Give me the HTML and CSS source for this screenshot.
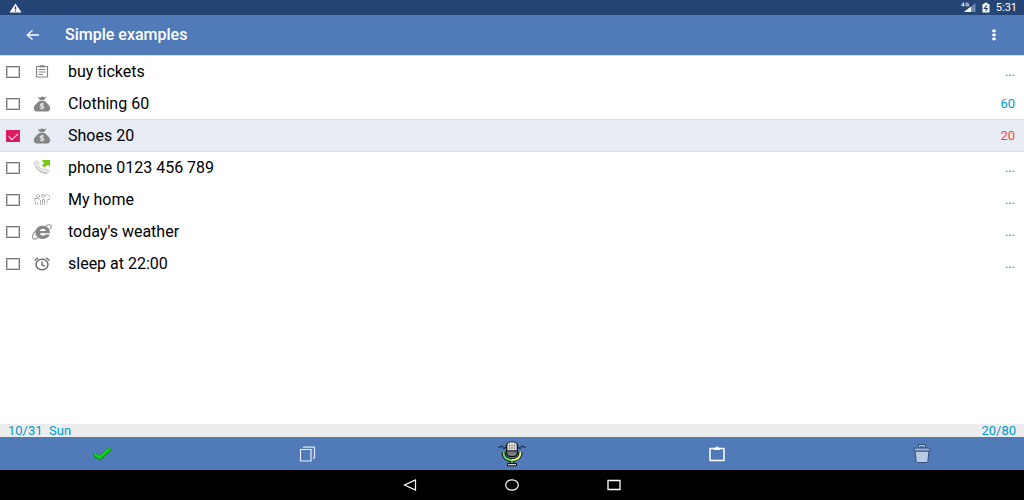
FILE: index.html
```html
<!DOCTYPE html>
<html lang="en">

<head>
    <meta charset="UTF-8">
    <meta name="viewport" content="width=device-width, initial-scale=1.0">
    <title>Simple examples</title>
    <link rel="stylesheet" href="styles.css">
</head>

<body>

    <!-- money bag is used by more than one row -->
    <svg class="defs" width="0" height="0" aria-hidden="true">
        <symbol id="moneyBag" viewBox="0 0 20 16">
            <path d="M5.500.8 8 1.800 10 .3 12 1.300 14.500.3 12 4.200H8z" fill="#858585" />
            <path d="M7.500 5h5c2.700 2 5.700 4.800 5.700 7.200 0 1.900-1.200 3.300-3 3.300H4.800c-1.800 0-3-1.400-3-3.300C1.800 9.800 4.800 7 7.500 5z" fill="#858585" />
            <path d="M12 8.300c-1-.8-4-.7-4 .7 0 1.600 4.100.7 4.100 2.300 0 1.500-3.200 1.400-4.300.5M10 7v6.500" fill="none" stroke="#fff" stroke-width=".9" />
        </symbol>
    </svg>

    <div class="screen">
        <div class="status-bar">
            <svg width="14" height="10" viewBox="0 0 14 10">
                <path d="M7.500.5 13.500 9.500H1.500z" fill="#fff" />
                <path d="M7.500 3.500v3M7.500 7.300v1.200" stroke="#254576" stroke-width="1.400" />
            </svg>
            <div class="status-right">
                <svg width="15" height="11" viewBox="0 0 15 11">
                    <path d="M14.500 1v9H3z" fill="#7188ac" />
                    <path d="M10 4.500V10H3z" fill="#fff" />
                    <path d="M2.500 4.500V.7L.5 3.300h3M7.500 1.200H5v2.600h2.500V2.500H6.500" fill="none" stroke="#fff" stroke-width=".8" />
                </svg>
                <svg width="8" height="11" viewBox="0 0 8 11">
                    <path d="M.5 2H2.500V.8h3V2h2v8.500h-7z" fill="#fff" />
                    <path d="M5 3 2.300 6.500h3L3.500 9" fill="none" stroke="#254576" stroke-width="1.100" />
                </svg>
                <span>5:31</span>
            </div>
        </div>

        <header class="app-bar">
            <button type="button" class="icon-btn" aria-label="Back">
                <svg width="14" height="12" viewBox="0 0 14 12">
                    <path d="M13 6H1.500M6.500 1.500 1.200 6l5.300 4.500" fill="none" stroke="#fff" stroke-width="1.300" />
                </svg>
            </button>
            <h1>Simple examples</h1>
            <button type="button" class="icon-btn" aria-label="More options">
                <svg width="4" height="12" viewBox="0 0 4 12">
                    <g fill="#fff">
                        <ellipse cx="2" cy="2" rx="1.900" ry="1.400" />
                        <ellipse cx="2" cy="6" rx="1.900" ry="1.400" />
                        <ellipse cx="2" cy="10" rx="1.900" ry="1.400" />
                    </g>
                </svg>
            </button>
        </header>

        <main>
            <ul class="list">
                <li class="row">
                    <input type="checkbox" id="item1">
                    <svg class="row-icon" width="20" height="16" viewBox="0 0 20 16">
                        <path d="M4.500 2.500h11v10.500h-11z" fill="none" stroke="#858585" stroke-width="1.200" />
                        <path d="M7.500 1.200h5v2.300h-5z" fill="#858585" />
                        <path d="M6.500 5.500h7M6.500 8h7M6.500 10.500h4.500" fill="none" stroke="#858585" stroke-width="1.200" />
                    </svg>
                    <label for="item1">buy tickets</label>
                    <span class="amount">...</span>
                </li>
                <li class="row">
                    <input type="checkbox" id="item2">
                    <svg class="row-icon" width="20" height="16"><use href="#moneyBag" /></svg>
                    <label for="item2">Clothing 60</label>
                    <span class="amount">60</span>
                </li>
                <li class="row selected">
                    <input type="checkbox" id="item3" checked>
                    <svg class="row-icon" width="20" height="16"><use href="#moneyBag" /></svg>
                    <label for="item3">Shoes 20</label>
                    <span class="amount">20</span>
                </li>
                <li class="row">
                    <input type="checkbox" id="item4">
                    <svg class="row-icon" width="20" height="16" viewBox="0 0 20 16">
                        <path d="M2.500 2.500c.5-1.700 2.500-2 3.500-.7l1 2c.3.700-1 1.200-.7 1.800 1 1.800 2.600 3 4.600 3.900.8.300 1.400-1 2.200-.7l3 1.200c1.500.7.700 2.500-.8 3.100C9.500 14.500 2 7.500 2.500 2.500z" fill="#e8e8e8" stroke="#bbb" stroke-width=".6" />
                        <path d="M4 7c2.500 4.500 6.500 6.300 11 6" fill="none" stroke="#aaa" stroke-width=".9" />
                        <path d="M10.500 0H18v6.500l-2.200-1.700L12.500 7.500 9.800 5.500 13 2.500H10.500z" fill="#78c80c" />
                    </svg>
                    <label for="item4">phone 0123 456 789</label>
                    <span class="amount">...</span>
                </li>
                <li class="row">
                    <input type="checkbox" id="item5">
                    <svg class="row-icon" width="20" height="16" viewBox="0 0 20 16">
                        <g fill="none" stroke="#aaa" stroke-width=".9">
                            <ellipse cx="6" cy="4" rx="1.700" ry="1.400" />
                            <ellipse cx="11" cy="4" rx="1.700" ry="1.400" />
                            <path d="M3.500 13V10l-.8-1V6.500h4L8.500 8v5M5.800 13v-3M10.500 13V7.500h2V13" />
                            <path d="M13 4l2-1.500L17.500 4v3.500H15V13" stroke-dasharray="3 1" />
                        </g>
                    </svg>
                    <label for="item5">My home</label>
                    <span class="amount">...</span>
                </li>
                <li class="row">
                    <input type="checkbox" id="item6">
                    <svg class="row-icon" width="20" height="16" viewBox="0 0 20 16">
                        <path d="M18 9.200H8c.2 1.600 1.300 2.400 3 2.400 1.300 0 2.200-.4 2.700-1.100h4.100c-.9 2.900-3.500 4.400-7 4.400-4.400 0-7.300-2.500-7.300-6.500s2.900-6.600 7.300-6.600c4.700 0 7.400 2.800 7.200 7.400zM8 7h5.700c-.1-1.500-1.200-2.300-2.800-2.300S8.200 5.500 8 7z" fill="#888" fill-rule="evenodd" />
                        <path d="M13.500 2C16.500.3 19.500.2 19.300 2.600c-.1.800-.5 1.500-1 2.200M4 6.500C1.500 8.800-.5 13 1 14.600c1 .9 3.300.2 5-.9" fill="none" stroke="#999" stroke-width="1.200" />
                    </svg>
                    <label for="item6">today's weather</label>
                    <span class="amount">...</span>
                </li>
                <li class="row">
                    <input type="checkbox" id="item7">
                    <svg class="row-icon" width="20" height="16" viewBox="0 0 20 16">
                        <g fill="none" stroke="#666" stroke-width="1.400">
                            <ellipse cx="10" cy="8.500" rx="6" ry="5.200" />
                            <path d="M10 5.500v3.300l2.700 1.600M2.500 4.500 6 1.800M14 1.800l3.500 2.700" />
                        </g>
                    </svg>
                    <label for="item7">sleep at 22:00</label>
                    <span class="amount">...</span>
                </li>
            </ul>
        </main>

        <div class="summary">
            <span class="date">10/31  Sun</span>
            <span>20/80</span>
        </div>

        <div class="toolbar">
            <button type="button" aria-label="Done">
                <svg width="22" height="16" viewBox="0 0 22 16">
                    <path d="M3 8 8.500 12.200 19.500 2.500" fill="none" stroke="#158a22" stroke-width="4" stroke-linejoin="round" />
                    <path d="M3.500 8 8.500 11.700 19 2.500" fill="none" stroke="#0bd80b" stroke-width="2.400" />
                </svg>
            </button>
            <button type="button" aria-label="Copy">
                <svg width="18" height="16" viewBox="0 0 18 16">
                    <path d="M2.500 3.500h10.500v11.500H2.500z" fill="none" stroke="#e9eef6" stroke-width="1.200" />
                    <path d="M5 1.200h11.500v10.800H14.500" fill="none" stroke="#dbe4f1" stroke-width="1.200" />
                </svg>
            </button>
            <button type="button" aria-label="Speak">
                <svg width="30" height="26" viewBox="0 0 30 26">
                    <path d="M1 6h3l1-1.500L7 8l1-2h2M20 6h2l1 2 2-3.500L26 6h3" fill="none" stroke="#15233c" stroke-width="1" />
                    <path d="M6.500 11c0 5.500 3.500 8 8.500 8s8.500-2.500 8.500-8" fill="none" stroke="#111" stroke-width="4" />
                    <path d="M15 19v4" stroke="#111" stroke-width="4" />
                    <path d="M6.500 11c0 5.500 3.500 8 8.500 8" fill="none" stroke="#65dc62" stroke-width="2" />
                    <path d="M15 19c5 0 8.500-2.500 8.500-8" fill="none" stroke="#dcf68a" stroke-width="2" />
                    <path d="M15 19v4" stroke="#71dc57" stroke-width="1.600" />
                    <path d="M10.500 22.500h9v2.300h-9z" fill="#ccc" stroke="#111" stroke-width="1" />
                    <rect x="9.500" y="1" width="11" height="14.500" rx="4" fill="#777980" stroke="#111" stroke-width="1.200" />
                    <path d="M10.500 9.500V4c0-1.500 1-2.500 2.500-2.500h4c1.500 0 2.500 1 2.500 2.500v5.500z" fill="#f4f4f4" />
                    <path d="M12.500 2v7.500M15 2v7.500M17.500 2v7.500M10 4.500h10M10 7h10" stroke="#777" stroke-width=".6" />
                    <path d="M10 9.900h10" stroke="#111" stroke-width="1" />
                </svg>
            </button>
            <button type="button" aria-label="Paste">
                <svg width="18" height="16" viewBox="0 0 18 16">
                    <path d="M2 2.500h14v12H2z" fill="none" stroke="#fff" stroke-width="1.500" stroke-linejoin="round" />
                    <path d="M5 2h2.500V.7h3V2H13L12 4H6z" fill="#fff" />
                </svg>
            </button>
            <button type="button" aria-label="Delete">
                <svg width="18" height="20" viewBox="0 0 18 20">
                    <path d="M6 4V1h6v3" fill="none" stroke="#33507f" stroke-width="2.200" />
                    <path d="M6.500 3.500V1.500h5v2" fill="none" stroke="#b9c9e3" stroke-width="1" />
                    <path d="M2 7h14l-1.200 10.500c-.1.700-.6 1-1.300 1H4.500c-.7 0-1.200-.3-1.300-1z" fill="#b9c9e3" stroke="#33507f" stroke-width="1" />
                    <path d="M1.500 4h15L17.200 7H.8z" fill="#9db3d6" stroke="#33507f" stroke-width="1" />
                </svg>
            </button>
        </div>

        <nav class="nav-bar">
            <button type="button" aria-label="Back">
                <svg width="14" height="12" viewBox="0 0 14 12">
                    <path d="M12.500 1v10L1.500 6z" fill="none" stroke="#fff" stroke-width="1.200" />
                </svg>
            </button>
            <button type="button" aria-label="Home">
                <svg width="14" height="12" viewBox="0 0 14 12">
                    <ellipse cx="7" cy="6" rx="6.300" ry="5.200" fill="none" stroke="#fff" stroke-width="1.200" />
                </svg>
            </button>
            <button type="button" aria-label="Recent apps">
                <svg width="14" height="12" viewBox="0 0 14 12">
                    <path d="M1 1.500h12v9H1z" fill="none" stroke="#fff" stroke-width="1.300" />
                </svg>
            </button>
        </nav>
    </div>

</body>

</html>
```
FILE: styles.css
```css
* {
    box-sizing: border-box;
}

body {
    margin: 0;
    font-family: Roboto, "Liberation Sans", sans-serif;
    background-color: #fff;
    color: #000;
}

svg {
    display: block;
}

.defs {
    position: absolute;
}

button {
    display: flex;
    align-items: center;
    justify-content: center;
    padding: 0;
    border: none;
    background: none;
    cursor: pointer;
}

.screen {
    display: flex;
    flex-direction: column;
    min-height: 100vh;
}

.status-bar {
    display: flex;
    align-items: center;
    justify-content: space-between;
    height: 15px;
    padding: 0 7px 0 8px;
    background: #254576;
    color: #fff;
    font-size: 11px;
    line-height: 15px;
}

.status-right {
    display: flex;
    align-items: center;
    gap: 6px;
}

.app-bar {
    display: flex;
    align-items: center;
    height: 40px;
    padding: 0 14px 0 17px;
    background: #507ab8;
    color: #fff;
}

.app-bar h1 {
    flex: 1;
    margin: 0 0 0 16px;
    font-size: 16px;
    font-weight: 500;
    line-height: 20px;
}

.icon-btn {
    width: 32px;
    height: 32px;
}

main {
    flex: 1;
    border-top: 1px solid #ddd;
}

.list {
    margin: 0;
    padding: 0;
    list-style: none;
}

.row {
    display: flex;
    align-items: center;
    height: 32px;
    padding: 0 9px 0 6px;
}

.row.selected {
    background: #e8ecf5;
    box-shadow: 0 -1px #ddd, inset 0 -1px #ddd;
}

.row input {
    appearance: none;
    width: 14px;
    height: 12px;
    margin: 0;
    border: 1px solid #777;
    outline: 1px solid #ccc;
    outline-offset: -2px;
    background: #fff;
}

.row input:checked {
    position: relative;
    border-color: #dd1d61;
    outline: none;
    background: #dd1d61;
}

.row input:checked::before {
    position: absolute;
    content: "";
    left: 4px;
    top: 0;
    width: 4px;
    height: 8px;
    border: solid #fff;
    border-width: 0 1px 1px 0;
    transform: rotate(48deg);
}

.row-icon {
    margin: 0 16px 0 12px;
}

.row label {
    flex: 1;
    font-size: 16px;
    line-height: 20px;
}

.amount {
    color: #0099cc;
    font-size: 13px;
    line-height: 16px;
}

.selected .amount {
    color: #ff4444;
}

.summary {
    display: flex;
    justify-content: space-between;
    height: 13px;
    padding: 0 8px;
    background: #ededed;
    color: #0099cc;
    font-size: 13px;
    line-height: 13px;
}

.date {
    white-space: pre;
}

.toolbar {
    display: grid;
    grid-template-columns: repeat(5, 1fr);
    height: 33px;
    background: #507ab8;
}

.nav-bar {
    display: flex;
    align-items: center;
    justify-content: center;
    gap: 88px;
    height: 30px;
    background: #000;
}
```
